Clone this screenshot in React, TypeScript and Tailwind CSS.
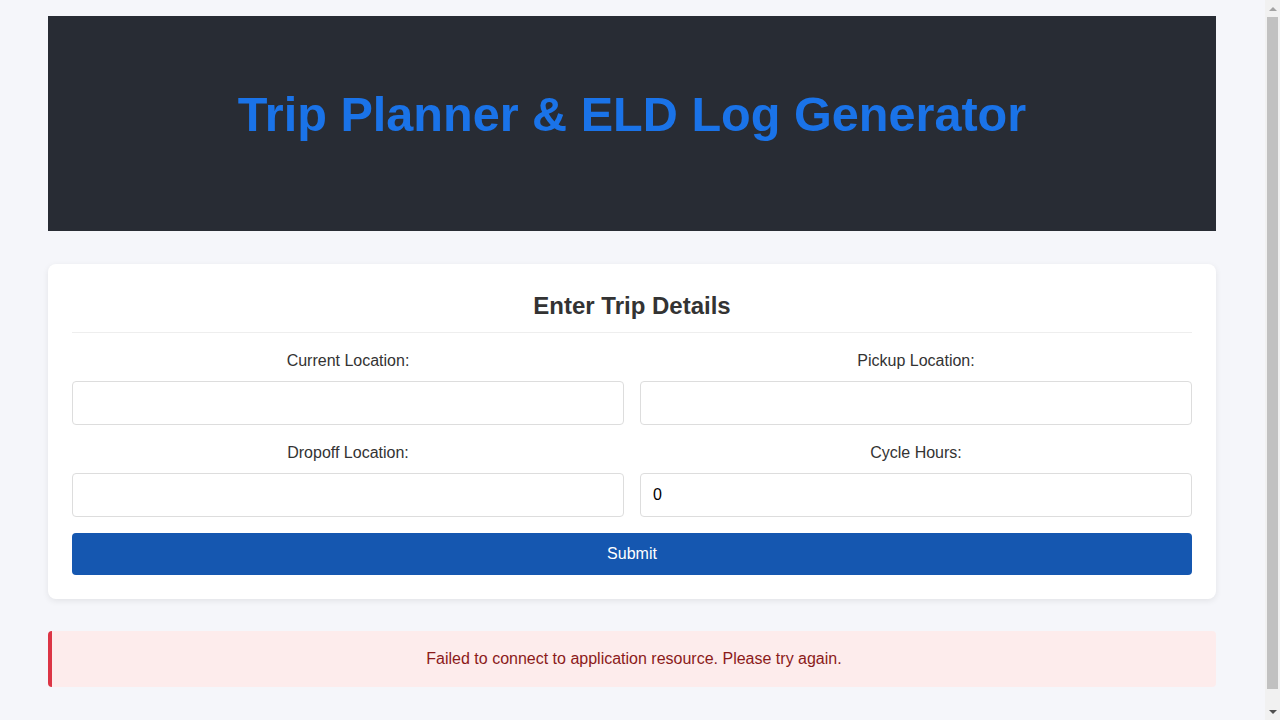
import { useState } from "react";

const fields = [
  { id: "current", label: "Current Location:" },
  { id: "pickup", label: "Pickup Location:" },
  { id: "dropoff", label: "Dropoff Location:" },
  { id: "cycle", label: "Cycle Hours:" },
];

function FakeScrollbar() {
  // browser scrollbar as seen in the screenshot
  return (
    <div className="fixed right-0 top-0 flex h-screen w-[15px] flex-col bg-[#f1f1f1]">
      <div className="flex h-[17px] items-center justify-center">
        <div className="h-0 w-0 border-x-[4px] border-b-[4px] border-x-transparent border-b-[#a3a3a3]" />
      </div>
      <div className="mx-[2px] h-[672px] bg-[#c1c1c1]" />
      <div className="flex-1" />
      <div className="flex h-[17px] items-center justify-center">
        <div className="h-0 w-0 border-x-[4px] border-t-[4px] border-x-transparent border-t-[#505050]" />
      </div>
    </div>
  );
}

export default function App() {
  const [values, setValues] = useState<Record<string, string>>({
    current: "",
    pickup: "",
    dropoff: "",
    cycle: "0",
  });

  return (
    <div className="min-h-screen bg-[#f5f6fa] pr-[16px] font-['Liberation_Sans',Arial,sans-serif]">
      <div className="mx-auto max-w-[1200px] px-4 pt-4 pb-12">
        <header className="flex h-[215px] items-center justify-center bg-[#282c34] pb-[18px]">
          <h1 className="text-[48.6px] font-bold leading-none text-[#1a73e8]">
            Trip Planner &amp; ELD Log Generator
          </h1>
        </header>

        <div className="mt-[33px] rounded-lg bg-white p-6 shadow-[0_2px_6px_rgba(0,0,0,0.08)]">
          <h2 className="border-b border-[#eee] pt-[1px] pb-[9px] text-center text-2xl font-bold leading-[34px] text-[#333]">
            Enter Trip Details
          </h2>

          <form
            className="mt-[18px]"
            onSubmit={(e) => {
              e.preventDefault();
            }}
          >
            <div className="grid grid-cols-2 gap-x-4 gap-y-[18px]">
              {fields.map((f) => (
                <div key={f.id}>
                  <label
                    htmlFor={f.id}
                    className="mb-[11px] block text-center text-base leading-[19px] text-[#333]"
                  >
                    {f.label}
                  </label>
                  <input
                    id={f.id}
                    type={f.id === "cycle" ? "number" : "text"}
                    value={values[f.id]}
                    onChange={(e) => setValues({ ...values, [f.id]: e.target.value })}
                    className="block h-[44px] w-full rounded border border-[#ddd] bg-white px-3 text-base text-black outline-none"
                  />
                </div>
              ))}
            </div>

            <button
              type="submit"
              className="mt-4 block h-[42px] w-full rounded bg-[#1557b0] text-base text-white"
            >
              Submit
            </button>
          </form>
        </div>

        <div className="mt-8 flex h-14 items-center justify-center rounded border-l-4 border-[#dc3545] bg-[#fdecec] text-base text-[#8b1a1a]">
          Failed to connect to application resource. Please try again.
        </div>
      </div>
      <FakeScrollbar />
    </div>
  );
}
